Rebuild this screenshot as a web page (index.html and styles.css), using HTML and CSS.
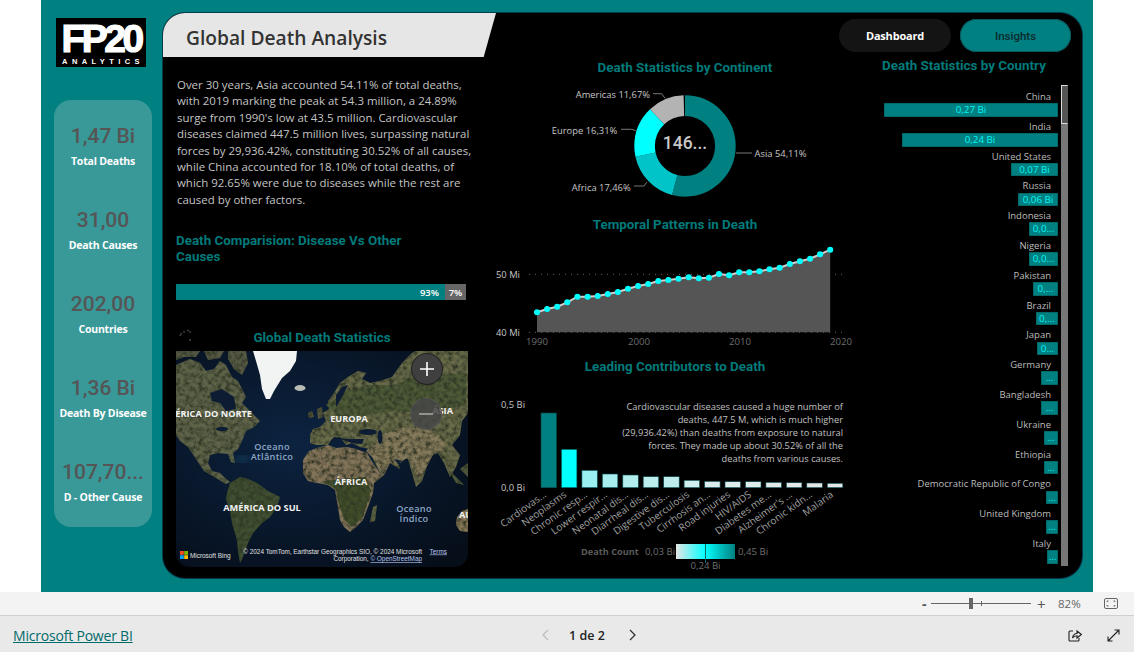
FILE: index.html
```html
<!DOCTYPE html>
<html lang="en">
<head>
<meta charset="utf-8">
<title>Global Death Analysis</title>
<link rel="stylesheet" href="styles.css">
</head>
<body>
<div class="stage">
  <div class="report">
    <aside class="side">
      <div class="logo"><span class="logo-big">FP20</span><span class="logo-small">ANALYTICS</span></div>
      <div class="kpis">
        <div class="kpi"><div class="kpi-v">1,47 Bi</div><div class="kpi-l">Total Deaths</div></div>
        <div class="kpi"><div class="kpi-v">31,00</div><div class="kpi-l">Death Causes</div></div>
        <div class="kpi"><div class="kpi-v">202,00</div><div class="kpi-l">Countries</div></div>
        <div class="kpi"><div class="kpi-v">1,36 Bi</div><div class="kpi-l">Death By Disease</div></div>
        <div class="kpi"><div class="kpi-v">107,70...</div><div class="kpi-l">D - Other Cause</div></div>
      </div>
    </aside>
    <main class="main">
      <section class="col-left">
        <div class="title"><h1>Global Death Analysis</h1></div>
        <div class="left-body">
          <p class="intro">Over 30 years, Asia accounted 54.11% of total deaths,<br>with 2019 marking the peak at 54.3 million, a 24.89%<br>surge from 1990's low at 43.5 million. Cardiovascular<br>diseases claimed 447.5 million lives, surpassing natural<br>forces by 29,936.42%, constituting 30.52% of all causes,<br>while China accounted for 18.10% of total deaths, of<br>which 92.65% were due to diseases while the rest are<br>caused by other factors.</p>
          <h2 class="head head-left">Death Comparision: Disease Vs Other<br>Causes</h2>
          <div class="ratio"><div class="ratio-a">93%</div><div class="ratio-b">7%</div></div>
          <div class="map-block">
            <svg class="spinner" width="14" height="16" viewBox="0 0 14 16"><g fill="#777"><circle cx="2" cy="5" r=".8"/><circle cx="5" cy="3" r=".7"/><circle cx="9" cy="1.500" r=".7"/><circle cx="11" cy="3" r=".7"/><circle cx="1" cy="6.500" r=".6"/><circle cx="11" cy="11" r=".8"/></g></svg>
            <h2 class="head head-map">Global Death Statistics</h2>
          </div>
          <div class="map">
            <svg class="map-svg" viewBox="0 0 292 216" width="292" height="216">
              <defs>
                <filter id="grain" x="0" y="0" width="100%" height="100%">
                  <feTurbulence type="fractalNoise" baseFrequency="0.22" numOctaves="4" seed="7" result="n"/>
                  <feColorMatrix in="n" type="matrix" values="0 0 0 0 0.03  0 0 0 0 0.04  0 0 0 0 0.02  2.4 0 0 0 -0.85" result="d"/>
                  <feComposite in="d" in2="SourceGraphic" operator="in" result="dd"/>
                  <feMerge><feMergeNode in="SourceGraphic"/><feMergeNode in="dd"/></feMerge>
                </filter>
                <filter id="soft"><feGaussianBlur stdDeviation="0.55"/></filter>
                <filter id="soft2"><feGaussianBlur stdDeviation="4"/></filter>
                <radialGradient id="sea" cx="0.4" cy="0.42" r="0.75">
                  <stop offset="0" stop-color="#0c2340"/><stop offset="1" stop-color="#060e1a"/>
                </radialGradient>
              </defs>
              <rect width="292" height="216" fill="url(#sea)"/>
              <g filter="url(#grain)">
                <g filter="url(#soft)">
                  <path fill="#5f634a" d="M0 14L14 8 24 12 30 20 38 18 44 10 50 14 56 26 62 30 66 38 70 46 66 52 74 60 84 70 78 76 70 80 66 90 62 98 57 102 59 112 55 111 52 103 42 102 34 104 32 112 36 120 44 122 48 126 54 131 50 133 40 127 28 120 20 108 12 96 4 90 0 84Z"/>
                  <path fill="#565a44" d="M0 0H24L20 6 8 6 0 9ZM28 0H48L44 7 32 9ZM52 0H70L72 12 66 24 58 18 52 8Z"/>
                  <path fill="#3f5030" d="M54 132L64 126 72 128 81 132 92 140 104 146 101 156 94 166 86 172 77 182 72 192 67 206 64 212 62 200 61 189 56 172 54 159 50 148 51 142Z"/>
                  <path fill="#83755a" d="M127 109L133 100 141 97 152 94 160 97 171 96 180 98 191 102 197 112 204 122 214 112 208 124 198 132 197 142 192 156 187 169 180 176 174 181 168 176 164 169 162 156 159 139 152 134 141 132 132 130 127 122Z"/>
                  <path fill="#3f4d2c" d="M146 130L190 126 195 140 187 166 176 176 168 168 162 150 160 138Z"/>
                  <path fill="#686a4a" d="M134 84L137 78 144 76 150 70 147 62 153 58 152 50 158 42 164 32 172 26 182 20 190 22 186 28 194 32 204 30 216 26 226 12 236 2 240 0H292V62L286 70 284 84 276 94 284 104 280 116 274 126 268 112 262 102 256 104 250 118 246 130 240 136 236 122 232 108 226 106 222 112 224 118 214 112 204 122 197 108 194 98 184 96 176 92 170 94 164 86 156 88 152 94 140 94 134 92Z"/>
                  <path fill="#857a5c" d="M190 100L206 84 226 76 250 78 266 86 270 98 258 102 250 116 244 128 238 120 232 106 224 112 214 112 204 120 198 108Z"/>
                  <path fill="#4e5a38" d="M150 54L166 42 190 34 216 34 240 26 290 22V54L250 62 220 60 190 64 168 70Z"/>
                  <path fill="#55573c" d="M141 58L146 56 147 66 142 68ZM132 62L136 60 138 66 133 67Z"/>
                  <path fill="#8a7a58" d="M281 166L286 160 292 158V181L284 180 280 174Z"/>
                  <path fill="#5f6344" d="M197 156L201 154 199 170 194 171Z"/>
                  <path fill="#525a3c" d="M272 118L280 126 288 134 280 132ZM284 118L292 112V126Z"/>
                </g>
              </g>
              <g fill="#0a1c32" filter="url(#soft)">
                <path d="M34 42L46 38 58 46 60 58 50 60 44 52 36 50Z"/>
                <path d="M152 94L164 88 176 92 186 93 188 88 170 88 158 86Z"/>
                <ellipse cx="192" cy="81" rx="9" ry="3"/>
                <ellipse cx="204" cy="86" rx="2.400" ry="7"/>
                <path d="M160 44L166 36 172 34 166 46 160 56Z"/>
                <ellipse cx="46" cy="78" rx="6" ry="2.200"/>
                <path d="M218 108L226 110 222 113Z"/>
              </g>
              <path fill="#f2f4f4" d="M77 0H121L120 10 114 20 106 27 98 40 94 48 90 48 86 38 84 24 80 10Z"/>
              <ellipse cx="124" cy="37" rx="5.500" ry="3" fill="#b8bcb4"/>
              <ellipse cx="66" cy="108" rx="7" ry="3" fill="#1a5a7a" opacity=".7" filter="url(#soft2)"/>
              <text class="map-big" x="76" y="66" text-anchor="end">AMÉRICA DO NORTE</text>
              <text class="map-big" x="173" y="71" text-anchor="middle">EUROPA</text>
              <text class="map-big" x="277" y="63" text-anchor="end">ÁSIA</text>
              <text class="map-big" x="175" y="134" text-anchor="middle">ÁFRICA</text>
              <text class="map-big" x="86" y="160" text-anchor="middle">AMÉRICA DO SUL</text>
              <text class="map-big" x="283" y="167">AU</text>
              <text class="map-sea" x="96" y="99" text-anchor="middle">Oceano</text>
              <text class="map-sea" x="96" y="109" text-anchor="middle">Atlântico</text>
              <text class="map-sea" x="238" y="161" text-anchor="middle">Oceano</text>
              <text class="map-sea" x="238" y="171" text-anchor="middle">Índico</text>
              <rect x="4" y="200" width="3.800" height="3.800" fill="#f25022"/>
              <rect x="8.200" y="200" width="3.800" height="3.800" fill="#7fba00"/>
              <rect x="4" y="204.200" width="3.800" height="3.800" fill="#00a4ef"/>
              <rect x="8.200" y="204.200" width="3.800" height="3.800" fill="#ffb900"/>
              <text class="map-att" x="14" y="207">Microsoft Bing</text>
              <text class="map-att" x="246" y="202.500" text-anchor="end">© 2024 TomTom, Earthstar Geographics SIO, © 2024 Microsoft</text>
              <text class="map-att map-link" x="271" y="202.500" text-anchor="end">Terms</text>
              <text class="map-att" x="246" y="210" text-anchor="end">Corporation, <tspan class="map-link">© OpenStreetMap</tspan></text>
            </svg>
            <div class="map-btn map-plus"><svg width="16" height="16" viewBox="0 0 16 16"><path d="M8 1V15M1 8H15" stroke="#fff" stroke-width="1.600"/></svg></div>
            <div class="map-btn map-minus"><svg width="16" height="16" viewBox="0 0 16 16"><path d="M1 8H15" stroke="#a8a8a8" stroke-width="1.600"/></svg></div>
          </div>
        </div>
      </section>

      <section class="col-mid">
        <h2 class="head head-continent">Death Statistics by Continent</h2>
        <svg class="chart chart-donut" viewBox="0 0 370 139" width="370" height="139">
          <g transform="rotate(-90 195 69)" fill="none" stroke-width="20.600">
            <circle cx="195" cy="69" r="40.400" pathLength="100" stroke="#008080" stroke-dasharray="54.11 100"/>
            <circle cx="195" cy="69" r="40.400" pathLength="100" stroke="#00c4c8" stroke-dasharray="17.46 100" stroke-dashoffset="-54.11"/>
            <circle cx="195" cy="69" r="40.400" pathLength="100" stroke="#00ffff" stroke-dasharray="16.31 100" stroke-dashoffset="-71.57"/>
            <circle cx="195" cy="69" r="40.400" pathLength="100" stroke="#b3b3b3" stroke-dasharray="11.67 100" stroke-dashoffset="-87.88"/>
          </g>
          <text class="donut-c" x="195" y="72" text-anchor="middle">146...</text>
          <g class="lead">
            <path d="M246 76H262"/><path d="M144 109H154L157 105"/><path d="M131 52.300H141.700L145.700 53.700"/><path d="M163 16.700H171.700L175 21.300"/>
          </g>
          <text class="lab" x="264.500" y="80">Asia 54,11%</text>
          <text class="lab" x="140.700" y="113.500" text-anchor="end">Africa 17,46%</text>
          <text class="lab" x="127.300" y="56.500" text-anchor="end">Europe 16,31%</text>
          <text class="lab" x="160" y="20.500" text-anchor="end">Americas 11,67%</text>
        </svg>
        <h2 class="head">Temporal Patterns in Death</h2>
        <svg class="chart chart-line" viewBox="0 0 370 116" width="370" height="116">
          <defs>
            <marker id="dot" viewBox="-4 -4 8 8" markerWidth="7" markerHeight="7" markerUnits="userSpaceOnUse"><circle r="3.500" fill="#00ffff"/></marker>
          </defs>
          <path class="grid" d="M39 40.300H357M39 98.300H357"/>
          <path class="area" d="M47 98.300V78.300L57.100 75 67.200 72.700 77.300 68.300 87.400 62.700 97.600 62.700 107.700 62 117.800 60 127.900 58 138 54.700 148.100 52 158.200 50 168.300 47 178.400 46 188.500 44.700 198.700 43.300 208.800 44.300 218.900 43.700 229 40 239.100 41.300 249.200 38.300 259.300 38.300 269.400 37.300 279.500 35.300 289.600 33.700 299.800 30 309.900 27.300 320 24.700 330.100 20.300 340.200 15.700V98.300Z"/>
          <polyline class="trend" points="47,78.300 57.100,75 67.200,72.700 77.300,68.300 87.400,62.700 97.600,62.700 107.700,62 117.800,60 127.900,58 138,54.700 148.100,52 158.200,50 168.300,47 178.400,46 188.500,44.700 198.700,43.300 208.800,44.300 218.900,43.700 229,40 239.100,41.300 249.200,38.300 259.300,38.300 269.400,37.300 279.500,35.300 289.600,33.700 299.800,30 309.900,27.300 320,24.700 330.100,20.300 340.200,15.700" marker-start="url(#dot)" marker-mid="url(#dot)" marker-end="url(#dot)"/>
          <text class="lab" x="6" y="44">50 Mi</text>
          <text class="lab" x="6" y="102">40 Mi</text>
          <text class="axis" x="47" y="111" text-anchor="middle">1990</text>
          <text class="axis" x="149" y="111" text-anchor="middle">2000</text>
          <text class="axis" x="250" y="111" text-anchor="middle">2010</text>
          <text class="axis" x="351" y="111" text-anchor="middle">2020</text>
        </svg>
        <h2 class="head head-lead">Leading Contributors to Death</h2>
        <svg class="chart chart-bars" viewBox="0 0 370 202" width="370" height="202">
          <defs>
            <linearGradient id="scale"><stop offset="0" stop-color="#e6e6e6"/><stop offset=".5" stop-color="#00ffff"/><stop offset="1" stop-color="#008080"/></linearGradient>
          </defs>
          <text class="lab" x="11" y="32">0,5 Bi</text>
          <text class="lab" x="11" y="115">0,0 Bi</text>
          <g class="bars">
            <rect x="51" y="37" width="15.500" height="74.700" fill="#008080"/>
            <rect x="71.400" y="73.300" width="15.500" height="38.400" fill="#00ffff"/>
            <rect x="91.900" y="94.300" width="15.500" height="17.400" fill="#9af0f0"/>
            <rect x="112.300" y="98" width="15.500" height="13.700" fill="#a9eeee"/>
            <rect x="132.800" y="99" width="15.500" height="12.700" fill="#b2eeee"/>
            <rect x="153.200" y="100.700" width="15.500" height="11" fill="#bcecec"/>
            <rect x="173.700" y="100.700" width="15.500" height="11" fill="#bfecec"/>
            <rect x="194.100" y="104.300" width="15.500" height="7.400" fill="#d2eded"/>
            <rect x="214.600" y="105.300" width="15.500" height="6.400" fill="#dcecec"/>
            <rect x="235" y="105.700" width="15.500" height="6" fill="#dfecec"/>
            <rect x="255.500" y="105.700" width="15.500" height="6" fill="#dfecec"/>
            <rect x="275.900" y="106.300" width="15.500" height="5.400" fill="#e2e9e9"/>
            <rect x="296.400" y="106.700" width="15.500" height="5" fill="#e4e8e8"/>
            <rect x="316.800" y="107" width="15.500" height="4.700" fill="#e5e7e7"/>
            <rect x="337.300" y="107.300" width="15.500" height="4.400" fill="#e6e6e6"/>
          </g>
          <g class="xlab" text-anchor="end">
            <text transform="translate(57 120) rotate(-36)">Cardiovas...</text>
            <text transform="translate(77 120) rotate(-36)">Neoplasms</text>
            <text transform="translate(98 120) rotate(-36)">Chronic resp...</text>
            <text transform="translate(118 120) rotate(-36)">Lower respir...</text>
            <text transform="translate(139 120) rotate(-36)">Neonatal dis...</text>
            <text transform="translate(159 120) rotate(-36)">Diarrheal dis...</text>
            <text transform="translate(180 120) rotate(-36)">Digestive dis...</text>
            <text transform="translate(200 120) rotate(-36)">Tuberculosis</text>
            <text transform="translate(221 120) rotate(-36)">Cirrhosis an...</text>
            <text transform="translate(241 120) rotate(-36)">Road injuries</text>
            <text transform="translate(262 120) rotate(-36)">HIV/AIDS</text>
            <text transform="translate(282 120) rotate(-36)">Diabetes me...</text>
            <text transform="translate(303 120) rotate(-36)">Alzheimer's ...</text>
            <text transform="translate(323 120) rotate(-36)">Chronic kidn...</text>
            <text transform="translate(344 120) rotate(-36)">Malaria</text>
          </g>
          <g class="note" text-anchor="end">
            <text x="353" y="33.500">Cardiovascular diseases caused a huge number of</text>
            <text x="353" y="46.500">deaths, 447.5 M, which is much higher</text>
            <text x="353" y="59.500">(29,936.42%) than deaths from exposure to natural</text>
            <text x="353" y="72.500">forces. They made up about 30.52% of all the</text>
            <text x="353" y="85.500">deaths from various causes.</text>
          </g>
          <text class="legend-t" x="91" y="179">Death Count</text>
          <text class="axis" x="155" y="179">0,03 Bi</text>
          <rect x="186" y="168" width="59" height="15" fill="url(#scale)"/>
          <path d="M215.500 168V187" stroke="#0a6a6a"/>
          <text class="axis" x="248" y="179">0,45 Bi</text>
          <text class="axis" x="215.500" y="193" text-anchor="middle">0,24 Bi</text>
        </svg>
      </section>

      <section class="col-right">
        <nav class="nav">
          <a class="nav-btn nav-dash">Dashboard</a>
          <a class="nav-btn nav-ins">Insights</a>
        </nav>
        <h2 class="head head-country">Death Statistics by Country</h2>
        <div class="list-wrap">
          <div class="list">
            <div class="row"><div class="c-name">China</div><div class="c-bar" style="width:174px">0,27 Bi</div></div>
            <div class="row"><div class="c-name">India</div><div class="c-bar" style="width:156px">0,24 Bi</div></div>
            <div class="row"><div class="c-name">United States</div><div class="c-bar" style="width:47px">0,07 Bi</div></div>
            <div class="row"><div class="c-name">Russia</div><div class="c-bar" style="width:40px">0,06 Bi</div></div>
            <div class="row"><div class="c-name">Indonesia</div><div class="c-bar" style="width:29px">0,0...</div></div>
            <div class="row"><div class="c-name">Nigeria</div><div class="c-bar" style="width:29px">0,0...</div></div>
            <div class="row"><div class="c-name">Pakistan</div><div class="c-bar" style="width:25px">0,...</div></div>
            <div class="row"><div class="c-name">Brazil</div><div class="c-bar" style="width:22px">0,...</div></div>
            <div class="row"><div class="c-name">Japan</div><div class="c-bar" style="width:21px">0...</div></div>
            <div class="row"><div class="c-name">Germany</div><div class="c-bar" style="width:17px">...</div></div>
            <div class="row"><div class="c-name">Bangladesh</div><div class="c-bar" style="width:17px">...</div></div>
            <div class="row"><div class="c-name">Ukraine</div><div class="c-bar" style="width:14px">...</div></div>
            <div class="row"><div class="c-name">Ethiopia</div><div class="c-bar" style="width:14px">...</div></div>
            <div class="row"><div class="c-name">Democratic Republic of Congo</div><div class="c-bar" style="width:12px">...</div></div>
            <div class="row"><div class="c-name">United Kingdom</div><div class="c-bar" style="width:12px">...</div></div>
            <div class="row"><div class="c-name">Italy</div><div class="c-bar" style="width:11px">...</div></div>
          </div>
          <div class="scroll"><div class="thumb"></div></div>
        </div>
      </section>
    </main>
  </div>
</div>
<div class="status">
  <span class="z-sym z-minus">-</span>
  <div class="slider"><span class="s-thumb"></span><span class="s-tick"></span></div>
  <span class="z-sym z-plus">+</span>
  <span class="z-val">82%</span>
  <svg class="z-fit" width="14" height="11" viewBox="0 0 14 11"><rect x=".5" y=".5" width="13" height="10" rx="1.500" fill="none" stroke="#666"/><path d="M3 4V3H4.500M11 4V3H9.500M3 7V8H4.500M11 7V8H9.500" fill="none" stroke="#666"/></svg>
</div>
<footer class="bottom">
  <a class="pbi">Microsoft Power BI</a>
  <div class="pager">
    <svg class="chev" width="8" height="12" viewBox="0 0 8 12"><path d="M7 1L2 6 7 11" fill="none" stroke="#bdbdbd" stroke-width="1.300"/></svg>
    <span class="page-no">1 de 2</span>
    <svg class="chev" width="8" height="12" viewBox="0 0 8 12"><path d="M1 1L6 6 1 11" fill="none" stroke="#333" stroke-width="1.300"/></svg>
  </div>
  <div class="tools">
    <svg width="14" height="13" viewBox="0 0 14 13"><path d="M5 2H2A1 1 0 0 0 1 3V11A1 1 0 0 0 2 12H10A1 1 0 0 0 11 11V9" fill="none" stroke="#222" stroke-width="1.100"/><path d="M4.500 9C5 6 7 4.500 9 4.500V2L13.300 5.500 9 9V6.700C7 6.700 5.500 7.500 4.500 9Z" fill="none" stroke="#222" stroke-width="1.100"/></svg>
    <svg width="13" height="13" viewBox="0 0 13 13"><path d="M1 12L12 1M7.500 1H12V5.500M1 7.500V12H5.500" fill="none" stroke="#222" stroke-width="1.100"/></svg>
  </div>
</footer>
</body>
</html>
```
FILE: styles.css
```css
* { box-sizing: border-box; }
html, body { margin: 0; padding: 0; width: 1134px; height: 652px; overflow: hidden; background: #fff; }
body { font-family: "Open Sans", "Liberation Sans", sans-serif; color: #222; }
h1, h2, p { margin: 0; font-weight: normal; }

.stage { height: 592px; padding-left: 41px; }
.report { width: 1052px; height: 592px; background: #008080; display: flex; }

/* sidebar */
.side { width: 122px; flex: none; padding: 18px 0 0 13px; }
.logo { width: 90px; height: 49px; margin-left: 2px; background: #000; color: #fff; display: flex; flex-direction: column; align-items: center; font-family: "Liberation Sans", sans-serif; font-weight: bold; }
.logo-big { font-size: 39px; line-height: 37px; height: 37px; letter-spacing: -3.500px; margin-top: 2px; -webkit-text-stroke: 1.200px #fff; }
.logo-small { font-size: 7.500px; line-height: 9px; letter-spacing: 4.400px; padding-left: 4px; }
.kpis { width: 98px; height: 427px; margin-top: 33px; background: #399898; border-radius: 17px; padding-top: 24px; display: flex; flex-direction: column; gap: 31.500px; align-items: center; }
.kpi { height: 52.500px; text-align: center; white-space: nowrap; }
.kpi-v { font-family: Roboto, sans-serif; font-weight: 500; font-size: 21px; line-height: 25px; color: #555; }
.kpi-l { font-family: "Open Sans", sans-serif; font-weight: 700; font-size: 10.500px; line-height: 14px; margin-top: 5px; color: #fff; letter-spacing: -.2px; }

/* main */
.main { margin-top: 13px; width: 919px; height: 565px; background: #000; border-radius: 22px; overflow: hidden; display: grid; grid-template-columns: 327px 349px 243px; box-shadow: 0 0 0 1px #053a4a; }
.head { font-family: Roboto, sans-serif; font-weight: 700; font-size: 13.400px; line-height: 18px; color: #007a7a; text-align: center; white-space: nowrap; }

/* left */
.title { height: 44px; width: 333px; background: #e6e6e6; clip-path: polygon(0 0, 100% 0, 96.300% 100%, 0 100%); padding-left: 23px; }
.title h1 { font-family: "Open Sans", sans-serif; font-weight: 600; font-size: 19.200px; line-height: 50px; color: #333; white-space: nowrap; }
.left-body { padding: 20px 0 0 13px; }
.intro { font-size: 11.450px; line-height: 16.400px; color: #c4c4c4; white-space: nowrap; padding-left: 1px; }
.head-left { text-align: left; line-height: 16px; margin-top: 25px; }
.ratio { display: flex; width: 290px; height: 16px; margin-top: 19px; font-size: 9.500px; font-weight: 600; line-height: 17px; color: #fff; }
.ratio-a { flex: none; width: 269px; background: #008080; text-align: right; padding-right: 6px; }
.ratio-b { flex: 1; background: #666; text-align: center; }
.map-block { position: relative; width: 292px; margin-top: 29px; }
.spinner { position: absolute; left: 3px; top: 0; }
.map { position: relative; width: 292px; height: 216px; margin-top: 4px; border-radius: 0 0 14px 14px; overflow: hidden; }
.map-svg { display: block; }
.map-big { font-family: "Open Sans", sans-serif; font-weight: 700; font-size: 9.200px; fill: #f2f2f2; }
.map-sea { font-family: "Open Sans", sans-serif; font-weight: 600; font-size: 9.200px; fill: #8da7c6; letter-spacing: .3px; }
.map-att { font-family: "Liberation Sans", sans-serif; font-size: 6.400px; fill: #e0e0e0; }
.map-link { fill: #b7c6f0; text-decoration: underline; }
.map-btn { position: absolute; width: 30px; height: 30px; border-radius: 50%; display: flex; align-items: center; justify-content: center; }
.map-plus { left: 236px; top: 3px; background: #3f3f3f; box-shadow: 0 0 0 1px #222; }
.map-minus { left: 235px; top: 48px; background: rgba(70,70,70,.85); box-shadow: 0 0 0 1px #555; }

/* mid */
.col-mid { width: 370px; padding-top: 46px; }
.chart { display: block; overflow: visible; }
.head-continent { padding-left: 20px; }
.head-lead { margin-top: 8px; }
.lab { font-family: "Open Sans", sans-serif; font-size: 9.400px; fill: #c6c6c6; }
.lead path { fill: none; stroke: #777; stroke-width: 1; }
.donut-c { font-family: Roboto, sans-serif; font-weight: 500; font-size: 17.500px; fill: #c8c8c8; }
.grid { stroke: #666; stroke-width: 1; stroke-dasharray: 1 5; fill: none; }
.area { fill: #555; }
.trend { fill: none; stroke: #d0d0d0; stroke-width: 2; }
.axis { font-family: "Open Sans", sans-serif; font-size: 9.600px; fill: #6e6e6e; }
.bars rect { stroke: #04484d; stroke-width: .6; }
.xlab { font-family: "Open Sans", sans-serif; font-size: 10px; fill: #a0a0a0; }
.note { font-family: "Open Sans", sans-serif; font-size: 9.300px; fill: #c0c0c0; }
.legend-t { font-family: "Open Sans", sans-serif; font-size: 9.200px; font-weight: 700; fill: #5a5a5a; }

/* right */
.col-right { padding-top: 6px; }
.nav { display: flex; gap: 9px; align-items: flex-start; }
.nav-btn { height: 33px; border-radius: 17px; display: flex; align-items: center; justify-content: center; font-size: 11px; }
.nav-dash { width: 112px; background: #141414; color: #fff; font-weight: 700; letter-spacing: -.2px; }
.nav-ins { width: 111px; height: 33px; background: #008080; color: #0b2a2e; font-size: 11.500px; font-family: Roboto, sans-serif; font-weight: 500; box-shadow: inset 0 0 0 1px #0a5a60; }
.head-country { width: 220px; margin-top: 5px; padding-left: 30px; }
.list-wrap { display: flex; margin-top: 10px; gap: 3px; height: 481px; }
.list { width: 219px; padding-top: 3px; display: flex; flex-direction: column; align-items: flex-end; }
.row { height: 29.800px; display: flex; flex-direction: column; align-items: flex-end; }
.c-name { height: 15.300px; padding-right: 7px; font-size: 9.500px; line-height: 17.500px; color: #bcbcbc; white-space: nowrap; }
.c-bar { height: 13.500px; background: #008080; box-shadow: inset 0 0 0 .5px #055; color: #00f5f5; font-size: 9.800px; line-height: 13.500px; text-align: center; white-space: nowrap; overflow: hidden; }
.scroll { width: 7px; height: 481px; background: #777; }
.thumb { height: 39px; background: #555; border: 1px solid #ddd; border-right-color: #555; }

/* status + footer */
.status { height: 24px; background: #f3f3f3; border-bottom: 1px solid #cfcfcf; display: flex; align-items: center; padding-left: 922px; color: #555; }
.z-sym { font-size: 14px; line-height: 20px; }
.z-minus { width: 9px; font-weight: 700; }
.slider { position: relative; width: 100px; height: 1px; background: #666; }
.s-thumb { position: absolute; left: 38px; top: -5px; width: 4px; height: 11px; background: #666; }
.s-tick { position: absolute; left: 50px; top: -2px; width: 1px; height: 5px; background: #666; }
.z-plus { margin-left: 6px; width: 12px; font-size: 15px; }
.z-val { margin-left: 9px; font-size: 11.500px; color: #666; }
.z-fit { margin-left: 23px; }
.bottom { height: 36px; background: #e9e9e9; display: flex; align-items: center; position: relative; padding: 2px 0 0 13px; }
.pbi { font-size: 14px; color: #006b6b; text-decoration: underline; letter-spacing: -.2px; width: 528px; }
.pager { display: flex; align-items: center; gap: 20px; }
.page-no { font-size: 12.500px; color: #222; font-weight: 600; margin-right: 4px; }
.tools { margin-left: auto; display: flex; gap: 25px; padding-right: 14px; align-items: center; }
```
